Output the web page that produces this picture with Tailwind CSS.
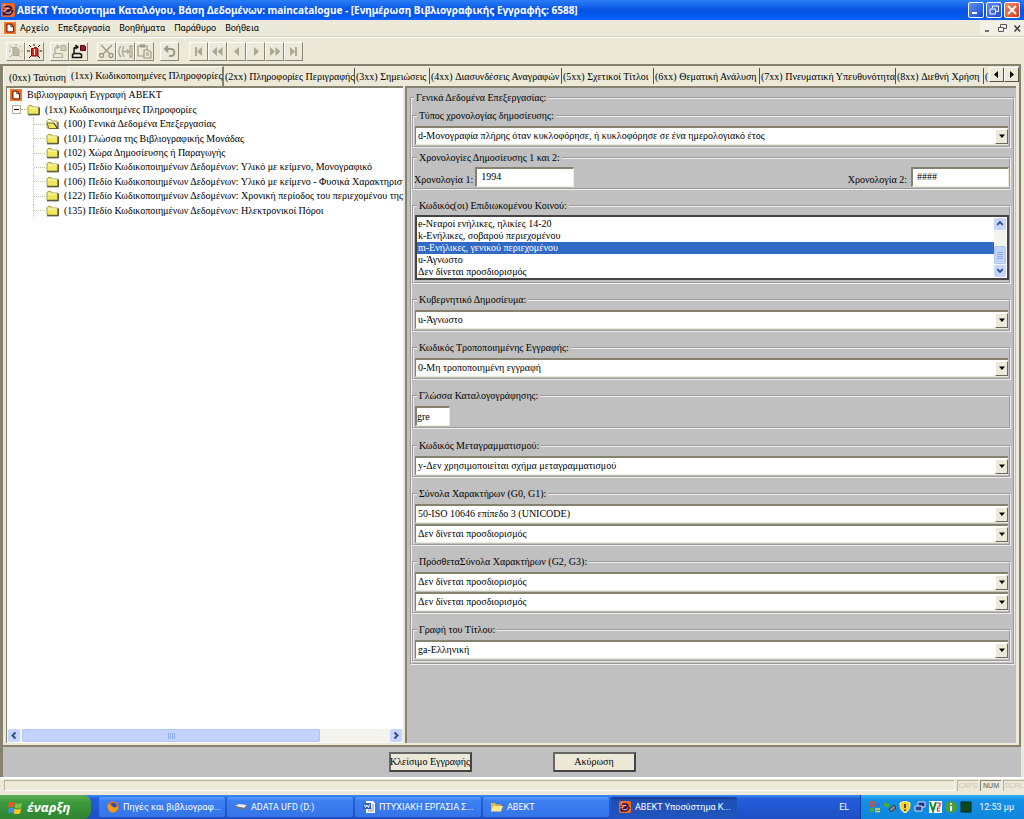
<!DOCTYPE html>
<html lang="el">
<head>
<meta charset="utf-8">
<title>ABEKT Υποσύστημα Καταλόγου</title>
<script src="https://cdn.jsdelivr.net/npm/@tailwindcss/browser@4"></script>
</head>
<body class="h-screen flex flex-col overflow-hidden bg-[#ece9d8] text-black font-['Liberation_Serif',serif] text-[10px] leading-[14px]">

<svg class="hidden" aria-hidden="true">
  <symbol id="abekt" viewBox="0 0 16 16"><rect width="16" height="16" rx="2" fill="#f0641e"/><path d="M4 4h6l2 2-2 2H7M3 7v6h7l3-3V8M5 10h5" fill="none" stroke="#1a1050" stroke-width="2"/><path d="M3 3l2-1M5 6h4M6 11.500h4l1.500-1.500M2 9h3" fill="none" stroke="#d6d2f4" stroke-width="1.200"/></symbol>
  <symbol id="doc" viewBox="0 0 14 14"><rect width="14" height="14" fill="#e8501a"/><rect x="1" y="1" width="12" height="12" fill="none" stroke="#f9a23c"/><path d="M3.500 2.500h4.500l3 3v6H3.500z" fill="#fff" stroke="#3a1206"/><path d="M8 2.500v3H11" fill="none" stroke="#3a1206"/></symbol>
  <symbol id="folder" viewBox="0 0 13 12"><path d="M1 10V2.500l1-1h3l1 1.500h5.500V10z" fill="#f0e75a" stroke="#a5a04a"/><path d="M2 4h8.500" stroke="#fffbd0"/><path d="M1 10.800h11.300V3.500" fill="none" stroke="#2c2c18"/></symbol>
  <symbol id="folder-open" viewBox="0 0 13 12"><path d="M1 10V2.500l1-1h3l1 1.500h5V10z" fill="#fffde0" stroke="#a5a04a"/><path d="M1 5h7l3.500 5.500H3z" fill="#f0e75a" stroke="#6b682e"/><path d="M8 5.500l4 5.300V4" fill="none" stroke="#2c2c18"/></symbol>
  <symbol id="down" viewBox="0 0 8 8"><path d="M1 2.500h6L4 6z" fill="#000"/></symbol>
</svg>

<!-- Title bar -->
<header class="h-5 shrink-0 flex items-center pl-px pr-1 bg-linear-to-b from-[#2a7df5] via-[#0553e2] to-[#0660fa] text-white">
  <svg class="w-3.5 h-3.5 mr-0.5"><use href="#abekt"/></svg>
  <h1 class="flex-1 font-['Noto_Sans',sans-serif] font-bold text-[10px] whitespace-nowrap">ABEKT Υποσύστημα Καταλόγου, Βάση Δεδομένων: maincatalogue - [Ενημέρωση Βιβλιογραφικής Εγγραφής: 6588]</h1>
  <div class="flex gap-0.5">
    <button aria-label="Ελαχιστοποίηση" class="w-4 h-4 rounded-[2px] border border-white bg-linear-to-br from-[#5e8ff5] to-[#1c46cf]"><svg viewBox="0 0 14 14"><path d="M3 10h5" stroke="#fff" stroke-width="2"/></svg></button>
    <button aria-label="Επαναφορά" class="w-4 h-4 rounded-[2px] border border-white bg-linear-to-br from-[#5e8ff5] to-[#1c46cf]"><svg viewBox="0 0 14 14" fill="none" stroke="#fff"><path d="M5.500 5V3h6v5.500H9"/><path d="M3 6h5.500v5H3z"/></svg></button>
    <button aria-label="Κλείσιμο" class="w-4 h-4 rounded-[2px] border border-white bg-linear-to-br from-[#f08a6a] to-[#d3370f]"><svg viewBox="0 0 14 14"><path d="M3 3l8 8M11 3l-8 8" stroke="#fff" stroke-width="1.800"/></svg></button>
  </div>
</header>

<!-- Menu bar -->
<nav class="h-[17px] shrink-0 flex items-center pl-1 border-b border-[#d8d2bd] font-[Roboto,sans-serif] text-[9px]">
  <svg class="w-3 h-3 mr-1"><use href="#doc"/></svg>
  <div class="flex-1 flex gap-[9px]">
    <a href="#">Αρχείο</a><a href="#">Επεξεργασία</a><a href="#">Βοηθήματα</a><a href="#">Παράθυρο</a><a href="#">Βοήθεια</a>
  </div>
  <div class="flex text-[#444]">
    <button aria-label="Ελαχιστοποίηση εγγράφου" class="w-[14px] h-3.5 bg-[#f3f1e6]"><svg viewBox="0 0 14 14"><path d="M5 10h4" stroke="#444" stroke-width="1.500"/></svg></button>
    <button aria-label="Επαναφορά εγγράφου" class="w-[14px] h-3.5 ml-px bg-[#f3f1e6]"><svg viewBox="0 0 14 14" fill="none" stroke="#555"><path d="M5.500 6V3.500h6v4H9"/><path d="M3.500 6.500h5v4h-5z"/></svg></button>
    <button aria-label="Κλείσιμο εγγράφου" class="w-[14px] h-3.5 ml-px bg-[#f3f1e6]"><svg viewBox="0 0 14 14"><path d="M4.500 4.500l5.500 6M10 4.500l-5.500 6" stroke="#444" stroke-width="1.600"/></svg></button>
  </div>
</nav>

<!-- Toolbar -->
<div role="toolbar" class="h-[27px] shrink-0 flex items-center pl-1.5 border-t border-white">
  <button aria-label="Νέα εγγραφή" class="size-[19px] border border-white border-r-[#8a8774] border-b-[#8a8774]"><svg viewBox="0 0 17 17" fill="none" stroke="#aca899"><path d="M6 4.500h4l2 2v6H6z" fill="#bbb8a8"/><path d="M9 1v2M3 3l2 2M14 3l-1 1M2 8h2M14 8h2M3 14l2-2M14 14l-1-1"/></svg></button>
  <button aria-label="Ενημέρωση εγγραφής" class="size-[19px] border border-white border-r-[#8a8774] border-b-[#8a8774]"><svg viewBox="0 0 17 17"><path d="M5.500 5.500h2l1-1h2l1.500 1.500v7h-6.500z" fill="#e02418" stroke="#7a1008"/><path d="M8.500 6v6" stroke="#fff"/><path d="M8 1v2M3 2l2 2M14 2l-2 2M1 8h3M13.500 8H16M3 15l2-2M14 15l-2-2" stroke="#111"/></svg></button>
  <button aria-label="Εισαγωγή" class="size-[19px] ml-1.5 border border-white border-r-[#8a8774] border-b-[#8a8774]"><svg viewBox="0 0 17 17" fill="none" stroke="#aca899"><path d="M4 10V6q0-2 3-2M5.500 2L8 4 5.500 6M2.500 14.500v-3l2-1h5l2 1v3z" stroke-width="1.200"/><path d="M10 2.500h4l1 1v4h-5z" fill="#d0cdbd"/></svg></button>
  <button aria-label="Αποθήκευση" class="size-[19px] border border-white border-r-[#8a8774] border-b-[#8a8774]"><svg viewBox="0 0 17 17" fill="none"><path d="M4 10V6q0-2 3-2M5.500 2L8 4 5.500 6M2.500 14.500v-3l2-1h5l2 1v3z" stroke="#111" stroke-width="1.500"/><path d="M10.500 2.500h4l1 1v4h-5z" fill="#9c1836" stroke="#5a0818"/></svg></button>
  <button aria-label="Αποκοπή" class="size-[19px] ml-[9px] border border-white border-r-[#8a8774] border-b-[#8a8774]"><svg viewBox="0 0 17 17" fill="none" stroke="#9b9888" stroke-width="1.300"><path d="M3 2l9 9M14 2l-9 9"/><circle cx="3.500" cy="12.500" r="2"/><circle cx="13" cy="12.500" r="2"/></svg></button>
  <button aria-label="Αντιγραφή" class="size-[19px] border border-white border-r-[#8a8774] border-b-[#8a8774]"><svg viewBox="0 0 17 17" fill="none" stroke="#aca899" stroke-width="1.300"><path d="M4 3C1 6 1 11 4 14M7 3C5 6 5 11 7 14M6 8.500h6M10 6.500l2 2-2 2M15 3h-2v11h2z"/></svg></button>
  <button aria-label="Επικόλληση" class="size-[19px] border border-white border-r-[#8a8774] border-b-[#8a8774]"><svg viewBox="0 0 17 17" fill="none" stroke="#9b9888" stroke-width="1.200"><path d="M2 3h9v10H2zM4.500 2h4v2h-4z"/><path d="M8 7h4l3 2v6H8zM10 10h3M10 12h3" fill="#ece9d8"/></svg></button>
  <button aria-label="Αναίρεση" class="size-[19px] ml-1.5 border border-white border-r-[#8a8774] border-b-[#8a8774]"><svg viewBox="0 0 17 17" fill="none" stroke="#9b9888" stroke-width="2"><path d="M4 6h6c5 0 4 7 0 7H8"/><path d="M7 3L4 6l3 3"/></svg></button>
  <button aria-label="Πρώτη" class="size-[19px] ml-2.5 border border-white border-r-[#8a8774] border-b-[#8a8774]"><svg viewBox="0 0 17 17" fill="#aca899"><path d="M5 4h2v9H5zM12 4v9L7 8.500z"/></svg></button>
  <button aria-label="Προηγούμενη σελίδα" class="size-[19px] border border-white border-r-[#8a8774] border-b-[#8a8774]"><svg viewBox="0 0 17 17" fill="#aca899"><path d="M8 4v9L3 8.500zM13.500 4v9l-5-4.500z"/></svg></button>
  <button aria-label="Προηγούμενη" class="size-[19px] border border-white border-r-[#8a8774] border-b-[#8a8774]"><svg viewBox="0 0 17 17" fill="#aca899"><path d="M11 4v9L6 8.500z"/></svg></button>
  <button aria-label="Επόμενη" class="size-[19px] border border-white border-r-[#8a8774] border-b-[#8a8774]"><svg viewBox="0 0 17 17" fill="#aca899"><path d="M7 4v9l5-4.500z"/></svg></button>
  <button aria-label="Επόμενη σελίδα" class="size-[19px] border border-white border-r-[#8a8774] border-b-[#8a8774]"><svg viewBox="0 0 17 17" fill="#aca899"><path d="M4 4v9l5-4.500zM9.500 4v9l5-4.500z"/></svg></button>
  <button aria-label="Τελευταία" class="size-[19px] border border-white border-r-[#8a8774] border-b-[#8a8774]"><svg viewBox="0 0 17 17" fill="#aca899"><path d="M5 4v9l5-4.500zM10 4h2v9h-2z"/></svg></button>
</div>

<!-- Document window -->
<main class="flex-1 min-h-0 flex flex-col border-t-2 border-l-3 border-[#85826f] mr-[3px]">
  <div class="flex-1 min-h-0 flex flex-col border-b-2 border-r-2 border-[#85826f] pb-0.5">
    <!-- Tabs -->
    <div class="h-5 shrink-0 flex items-stretch bg-[#ece9d8] border-l border-white">
      <div role="tablist" class="flex-1 min-w-0 flex overflow-hidden whitespace-nowrap">
        <button role="tab" class="shrink-0 w-[64px] pt-1 text-left pl-[5px]">(0xx) Ταύτιση</button>
        <button role="tab" aria-selected="true" class="shrink-0 w-[156px] text-left pl-0.5 pb-0.5 border-l border-t border-white border-r-2 border-r-[#85826f]">(1xx) Κωδικοποιημένες Πληροφορίες</button>
        <button role="tab" class="shrink-0 w-[131px] my-0.5 pt-0.5 text-left pl-px border-r border-[#55534a]">(2xx) Πληροφορίες Περιγραφής</button>
        <button role="tab" class="shrink-0 w-[75px] my-0.5 pt-0.5 text-left pl-px border-r border-[#55534a]">(3xx) Σημειώσεις</button>
        <button role="tab" class="shrink-0 w-[132px] my-0.5 pt-0.5 text-left pl-px border-r border-[#55534a]">(4xx) Διασυνδέσεις Αναγραφών</button>
        <button role="tab" class="shrink-0 w-[92px] my-0.5 pt-0.5 text-left pl-px border-r border-[#55534a]">(5xx) Σχετικοί Τίτλοι</button>
        <button role="tab" class="shrink-0 w-[106px] my-0.5 pt-0.5 text-left pl-px border-r border-[#55534a]">(6xx) Θεματική Ανάλυση</button>
        <button role="tab" class="shrink-0 w-[136px] my-0.5 pt-0.5 text-left pl-px border-r border-[#55534a]">(7xx) Πνευματική Υπευθυνότητα</button>
        <button role="tab" class="shrink-0 w-[88px] my-0.5 pt-0.5 text-left pl-px border-r border-[#55534a]">(8xx) Διεθνή Χρήση</button>
        <button role="tab" class="shrink-0 my-0.5 pt-0.5 text-left pl-px">(</button>
      </div>
      <div class="flex h-[15px] mt-px">
        <button aria-label="Προηγούμενες καρτέλες" class="w-[15px] border border-white border-r-[#55534a] border-b-[#55534a]"><svg viewBox="0 0 13 13"><path d="M8 3v7L4 6.500z"/></svg></button>
        <button aria-label="Επόμενες καρτέλες" class="w-[15px] border border-white border-r-[#55534a] border-b-[#55534a]"><svg viewBox="0 0 13 13"><path d="M5 3v7l4-3.500z"/></svg></button>
      </div>
    </div>

    <div class="flex-1 min-h-0 flex gap-0.5 pl-[3px] pr-[3px]">
      <!-- Record tree -->
      <section class="w-[397px] shrink-0 flex flex-col bg-white border-t-2 border-l border-[#85826f]">
        <ul class="flex-1 overflow-hidden whitespace-nowrap">
          <li class="flex items-center gap-[5px] h-3.5 pl-[3px]"><svg class="size-3"><use href="#doc"/></svg>Βιβλιογραφική Εγγραφή ABEKT</li>
          <li>
            <div class="flex items-center h-[15px] pl-[5px]"><span class="size-[9px] border border-[#b5b19c] flex items-center justify-center"><span class="w-[5px] h-px bg-black"></span></span><span class="w-1.5 border-t border-dotted border-[#b5b19c]"></span><svg class="w-[13px] h-3 mr-[5px]"><use href="#folder"/></svg>(1xx) Κωδικοποιημένες Πληροφορίες</div>
            <ul class="ml-[26px] h-[101px] grid grid-rows-7">
              <li class="flex items-center gap-[5px] border-l border-dotted border-[#c5c2b0]"><span class="w-[11px] -mr-1 border-t border-dotted border-[#c5c2b0]"></span><svg class="w-[13px] h-3 shrink-0"><use href="#folder-open"/></svg>(100) Γενικά Δεδομένα Επεξεργασίας</li>
              <li class="flex items-center gap-[5px] border-l border-dotted border-[#c5c2b0]"><span class="w-[11px] -mr-1 border-t border-dotted border-[#c5c2b0]"></span><svg class="w-[13px] h-3 shrink-0"><use href="#folder"/></svg>(101) Γλώσσα της Βιβλιογραφικής Μονάδας</li>
              <li class="flex items-center gap-[5px] border-l border-dotted border-[#c5c2b0]"><span class="w-[11px] -mr-1 border-t border-dotted border-[#c5c2b0]"></span><svg class="w-[13px] h-3 shrink-0"><use href="#folder"/></svg>(102) Χώρα Δημοσίευσης ή Παραγωγής</li>
              <li class="flex items-center gap-[5px] border-l border-dotted border-[#c5c2b0]"><span class="w-[11px] -mr-1 border-t border-dotted border-[#c5c2b0]"></span><svg class="w-[13px] h-3 shrink-0"><use href="#folder"/></svg>(105) Πεδίο Κωδικοποιημένων Δεδομένων: Υλικό με κείμενο, Μονογραφικό</li>
              <li class="flex items-center gap-[5px] border-l border-dotted border-[#c5c2b0]"><span class="w-[11px] -mr-1 shrink-0 border-t border-dotted border-[#c5c2b0]"></span><svg class="w-[13px] h-3 shrink-0"><use href="#folder"/></svg>(106) Πεδίο Κωδικοποιημένων Δεδομένων: Υλικό με κείμενο - Φυσικά Χαρακτηριστικο</li>
              <li class="flex items-center gap-[5px] border-l border-dotted border-[#c5c2b0]"><span class="w-[11px] -mr-1 shrink-0 border-t border-dotted border-[#c5c2b0]"></span><svg class="w-[13px] h-3 shrink-0"><use href="#folder"/></svg>(122) Πεδίο Κωδικοποιημένων Δεδομένων: Χρονική περίοδος του περιεχομένου της β</li>
              <li class="flex items-center gap-[5px] border-l border-dotted border-[#c5c2b0]"><span class="w-[11px] -mr-1 border-t border-dotted border-[#c5c2b0]"></span><svg class="w-[13px] h-3 shrink-0"><use href="#folder"/></svg>(135) Πεδίο Κωδικοποιημένων Δεδομένων: Ηλεκτρονικοί Πόροι</li>
            </ul>
          </li>
        </ul>
        <div class="h-[13px] mb-px flex bg-[#f4f3ee]">
          <button aria-label="Κύλιση αριστερά" class="w-3 ml-px rounded-[2px] bg-[#c6d5fd]"><svg viewBox="0 0 12 13"><path d="M7.500 3.500l-3 3 3 3" fill="none" stroke="#31507f" stroke-width="2"/></svg></button>
          <div class="flex-1 pl-0.5 flex"><div class="w-[81%] rounded-[2px] border border-[#b0c4f5] bg-[#c3d3fd] flex justify-center items-center gap-px"><i class="w-px h-1.5 bg-[#8faaf0]"></i><i class="w-px h-1.5 bg-[#8faaf0]"></i><i class="w-px h-1.5 bg-[#8faaf0]"></i><i class="w-px h-1.5 bg-[#8faaf0]"></i></div></div>
          <button aria-label="Κύλιση δεξιά" class="w-3 mr-px rounded-[2px] bg-[#c6d5fd]"><svg viewBox="0 0 12 13"><path d="M4.500 3.500l3 3-3 3" fill="none" stroke="#31507f" stroke-width="2"/></svg></button>
        </div>
      </section>

      <!-- Field editor -->
      <form class="flex-1 min-w-0 bg-[#c0c0c0] border-t-2 border-l-2 border-[#85826f] pt-[3px] pl-[3px] pr-px">
        <fieldset class="min-w-0 border-2 [border-style:groove] border-[#eeeeee] pb-px">
          <legend class="ml-0.5 px-0.5 h-3.5 leading-[14px]">Γενικά Δεδομένα Επεξεργασίας:</legend>

          <fieldset class="mt-1 mr-0.5 min-w-0 border-2 [border-style:groove] border-[#eeeeee] pt-[3px] pl-px pr-px pb-px">
            <legend class="ml-0.5 px-0.5 h-3.5 leading-[14px]"><label for="f1">Τύπος χρονολογίας δημοσίευσης:</label></legend>
            <div class="grid h-[19px]"><select id="f1" class="[grid-area:1/1] appearance-none bg-white border-t-2 border-l border-[#85826f] border-b border-b-[#ece9d8] pl-0.5 pb-px leading-[14px]"><option>d-Μονογραφία πλήρης όταν κυκλοφόρησε, ή κυκλοφόρησε σε ένα ημερολογιακό έτος</option></select><span class="[grid-area:1/1] justify-self-end self-center mt-px w-[13px] h-[15px] pointer-events-none bg-[#ece9d8] border border-white border-r-[#6b6959] border-b-[#6b6959] flex items-center justify-center"><svg class="size-2"><use href="#down"/></svg></span></div>
          </fieldset>

          <fieldset class="mt-[3px] mr-0.5 min-w-0 border-2 [border-style:groove] border-[#eeeeee]">
            <legend class="ml-[3px] px-0.5 h-3.5 leading-[14px]">Χρονολογίες Δημοσίευσης 1 και 2:</legend>
            <div class="flex items-start pt-0.5 h-[23px]">
              <label for="d1" class="pt-1.5">Χρονολογία 1:</label>
              <input id="d1" value="1994" class="ml-0.5 w-[99px] h-5 px-1 pb-0.5 bg-white border-t-2 border-l-2 border-[#85826f] border-b border-r border-b-[#ece9d8] border-r-[#ece9d8]">
              <label for="d2" class="ml-auto pt-1.5">Χρονολογία 2:</label>
              <input id="d2" value="####" class="ml-1 w-[98px] h-5 px-1 pb-0.5 bg-white border-t-2 border-l-2 border-[#85826f] border-b border-r border-b-[#ece9d8] border-r-[#ece9d8]">
            </div>
          </fieldset>

          <fieldset class="mt-[9px] mr-0.5 min-w-0 border-2 [border-style:groove] border-[#eeeeee] pt-0.5 pl-px pb-0.5">
            <legend class="ml-0.5 px-0.5 h-3.5 leading-[14px]"><label for="aud">Κωδικός(οι) Επιδιωκομένου Κοινού:</label></legend>
            <div class="flex h-[65px] bg-white border-2 border-[#444] pt-px pr-px">
              <select id="aud" size="5" class="flex-1 appearance-none bg-none overflow-hidden leading-3 outline-none">
                <option class="h-3 min-h-0 p-0 pl-px leading-3">e-Νεαροί ενήλικες, ηλικίες 14-20</option>
                <option class="h-3 min-h-0 p-0 pl-px leading-3">k-Ενήλικες, σοβαρού περιεχομένου</option>
                <option selected class="h-3 min-h-0 p-0 pl-px leading-3 bg-linear-to-r from-[#316ac5] to-[#316ac5] [-webkit-text-fill-color:#fff]">m-Ενήλικες, γενικού περιεχομένου</option>
                <option class="h-3 min-h-0 p-0 pl-px leading-3">u-Άγνωστο</option>
                <option class="h-3 min-h-0 p-0 pl-px leading-3">Δεν δίνεται προσδιορισμός</option>
              </select>
              <div class="w-3 flex flex-col bg-[#f4f3ee] mb-px">
                <button type="button" aria-label="Κύλιση πάνω" class="h-3 rounded-[2px] bg-[#c6d5fd]"><svg viewBox="0 0 13 12"><path d="M3.500 7.500l3-3 3 3" fill="none" stroke="#31507f" stroke-width="2"/></svg></button>
                <div class="flex-1"></div>
                <div class="h-[18px] rounded-[2px] border border-[#b0c4f5] bg-[#c3d3fd] flex flex-col justify-center items-center gap-px"><i class="w-1.5 h-px bg-[#8faaf0]"></i><i class="w-1.5 h-px bg-[#8faaf0]"></i><i class="w-1.5 h-px bg-[#8faaf0]"></i><i class="w-1.5 h-px bg-[#8faaf0]"></i></div>
                <button type="button" aria-label="Κύλιση κάτω" class="h-3 mt-px rounded-[2px] bg-[#c6d5fd]"><svg viewBox="0 0 13 12"><path d="M3.500 4.500l3 3 3-3" fill="none" stroke="#31507f" stroke-width="2"/></svg></button>
              </div>
            </div>
          </fieldset>

          <fieldset class="mt-[9px] mr-0.5 min-w-0 border-2 [border-style:groove] border-[#eeeeee] pt-[3px] px-px pb-px">
            <legend class="ml-0.5 px-0.5 h-3.5 leading-[14px]"><label for="f4">Κυβερνητικό Δημοσίευμα:</label></legend>
            <div class="grid h-[19px]"><select id="f4" class="[grid-area:1/1] appearance-none bg-white border-t-2 border-l border-[#85826f] border-b border-b-[#ece9d8] pl-0.5 leading-[14px]"><option>u-Άγνωστο</option></select><span class="[grid-area:1/1] justify-self-end self-center mt-px w-[13px] h-[15px] pointer-events-none bg-[#ece9d8] border border-white border-r-[#6b6959] border-b-[#6b6959] flex items-center justify-center"><svg class="size-2"><use href="#down"/></svg></span></div>
          </fieldset>

          <fieldset class="mt-[9px] mr-0.5 min-w-0 border-2 [border-style:groove] border-[#eeeeee] pt-[3px] px-px pb-px">
            <legend class="ml-0.5 px-0.5 h-3.5 leading-[14px]"><label for="f5">Κωδικός Τροποποιημένης Εγγραφής:</label></legend>
            <div class="grid h-[19px]"><select id="f5" class="[grid-area:1/1] appearance-none bg-white border-t-2 border-l border-[#85826f] border-b border-b-[#ece9d8] pl-0.5 leading-[14px]"><option>0-Μη τροποποιημένη εγγραφή</option></select><span class="[grid-area:1/1] justify-self-end self-center mt-px w-[13px] h-[15px] pointer-events-none bg-[#ece9d8] border border-white border-r-[#6b6959] border-b-[#6b6959] flex items-center justify-center"><svg class="size-2"><use href="#down"/></svg></span></div>
          </fieldset>

          <fieldset class="mt-[9px] mr-0.5 min-w-0 border-2 [border-style:groove] border-[#eeeeee] pt-[3px] px-px pb-px">
            <legend class="ml-0.5 px-0.5 h-3.5 leading-[14px]"><label for="f6">Γλώσσα Καταλογογράφησης:</label></legend>
            <input id="f6" value="gre" class="block w-[35px] h-5 pb-px bg-white border-t-2 border-l-2 border-[#85826f] border-b border-r border-b-[#ece9d8] border-r-[#ece9d8]">
          </fieldset>

          <fieldset class="mt-[10px] mr-0.5 min-w-0 border-2 [border-style:groove] border-[#eeeeee] pt-[3px] px-px pb-px">
            <legend class="ml-0.5 px-0.5 h-3.5 leading-[14px]"><label for="f7">Κωδικός Μεταγραμματισμού:</label></legend>
            <div class="grid h-[19px]"><select id="f7" class="[grid-area:1/1] appearance-none bg-white border-t-2 border-l border-[#85826f] border-b border-b-[#ece9d8] pl-0.5 leading-[14px]"><option>y-Δεν χρησιμοποιείται σχήμα μεταγραμματισμού</option></select><span class="[grid-area:1/1] justify-self-end self-center mt-px w-[13px] h-[15px] pointer-events-none bg-[#ece9d8] border border-white border-r-[#6b6959] border-b-[#6b6959] flex items-center justify-center"><svg class="size-2"><use href="#down"/></svg></span></div>
          </fieldset>

          <fieldset class="mt-[9px] mr-0.5 min-w-0 border-2 [border-style:groove] border-[#eeeeee] pt-[3px] px-px pb-px">
            <legend class="ml-0.5 px-0.5 h-3.5 leading-[14px]">Σύνολα Χαρακτήρων (G0, G1):</legend>
            <div class="grid h-[19px]"><select aria-label="G0" class="[grid-area:1/1] appearance-none bg-white border-t-2 border-l border-[#85826f] border-b border-b-[#ece9d8] pl-0.5 leading-[14px]"><option>50-ISO 10646 επίπεδο 3 (UNICODE)</option></select><span class="[grid-area:1/1] justify-self-end self-center mt-px w-[13px] h-[15px] pointer-events-none bg-[#ece9d8] border border-white border-r-[#6b6959] border-b-[#6b6959] flex items-center justify-center"><svg class="size-2"><use href="#down"/></svg></span></div>
            <div class="grid h-[19px] mt-px"><select aria-label="G1" class="[grid-area:1/1] appearance-none bg-white border-t-2 border-l border-[#85826f] border-b border-b-[#ece9d8] pl-0.5 leading-[14px]"><option>Δεν δίνεται προσδιορισμός</option></select><span class="[grid-area:1/1] justify-self-end self-center mt-px w-[13px] h-[15px] pointer-events-none bg-[#ece9d8] border border-white border-r-[#6b6959] border-b-[#6b6959] flex items-center justify-center"><svg class="size-2"><use href="#down"/></svg></span></div>
          </fieldset>

          <fieldset class="mt-[9px] mr-0.5 min-w-0 border-2 [border-style:groove] border-[#eeeeee] pt-[3px] px-px pb-px">
            <legend class="ml-0.5 px-0.5 h-3.5 leading-[14px]">ΠρόσθεταΣύνολα Χαρακτήρων (G2, G3):</legend>
            <div class="grid h-[19px]"><select aria-label="G2" class="[grid-area:1/1] appearance-none bg-white border-t-2 border-l border-[#85826f] border-b border-b-[#ece9d8] pl-0.5 leading-[14px]"><option>Δεν δίνεται προσδιορισμός</option></select><span class="[grid-area:1/1] justify-self-end self-center mt-px w-[13px] h-[15px] pointer-events-none bg-[#ece9d8] border border-white border-r-[#6b6959] border-b-[#6b6959] flex items-center justify-center"><svg class="size-2"><use href="#down"/></svg></span></div>
            <div class="grid h-[19px] mt-px"><select aria-label="G3" class="[grid-area:1/1] appearance-none bg-white border-t-2 border-l border-[#85826f] border-b border-b-[#ece9d8] pl-0.5 leading-[14px]"><option>Δεν δίνεται προσδιορισμός</option></select><span class="[grid-area:1/1] justify-self-end self-center mt-px w-[13px] h-[15px] pointer-events-none bg-[#ece9d8] border border-white border-r-[#6b6959] border-b-[#6b6959] flex items-center justify-center"><svg class="size-2"><use href="#down"/></svg></span></div>
          </fieldset>

          <fieldset class="mt-[9px] mr-0.5 min-w-0 border-2 [border-style:groove] border-[#eeeeee] pt-[3px] px-px pb-px">
            <legend class="ml-0.5 px-0.5 h-3.5 leading-[14px]"><label for="f10">Γραφή του Τίτλου:</label></legend>
            <div class="grid h-[19px]"><select id="f10" class="[grid-area:1/1] appearance-none bg-white border-t-2 border-l border-[#85826f] border-b border-b-[#ece9d8] pl-0.5 leading-[14px]"><option>ga-Ελληνική</option></select><span class="[grid-area:1/1] justify-self-end self-center mt-px w-[13px] h-[15px] pointer-events-none bg-[#ece9d8] border border-white border-r-[#6b6959] border-b-[#6b6959] flex items-center justify-center"><svg class="size-2"><use href="#down"/></svg></span></div>
          </fieldset>
        </fieldset>
      </form>
    </div>
  </div>

  <div class="h-[30px] shrink-0 flex items-center justify-center gap-[81px] bg-[#c0c0c0] whitespace-nowrap">
    <button class="w-[83px] h-5 flex items-center justify-center bg-[#ece9d8] border-2 border-[#444] border-t-[#666] border-l-[#666]">Κλείσιμο Εγγραφής</button>
    <button class="w-[83px] h-5 flex items-center justify-center bg-[#ece9d8] border-2 border-[#444] border-t-[#666] border-l-[#666]">Ακύρωση</button>
  </div>
</main>

<!-- Status bar -->
<footer class="h-[18px] shrink-0 flex items-start gap-0.5 pt-px pl-1 border-t-2 border-white font-['Liberation_Sans',sans-serif] text-[7px] leading-[10px]">
  <div class="flex-1 h-[11px] border border-[#b5b19c] border-r-white border-b-white"></div>
  <div class="w-[21px] h-[11px] text-center text-[#c9c5b2] border-l border-t border-[#b5b19c]">CAPS</div>
  <div class="w-[21px] h-[11px] text-center text-[#555] border-l border-t border-[#85826f]">NUM</div>
  <div class="w-[21px] h-[11px] text-center text-[#c9c5b2] border-l border-t border-[#b5b19c]">SCRL</div>
</footer>

<!-- Taskbar -->
<div class="h-6 shrink-0 flex items-stretch bg-linear-to-b from-[#3f8cf3] via-[#245edb] via-15% to-[#1f4fc4] text-white font-[Roboto,sans-serif] text-[9px] whitespace-nowrap">
  <button class="w-[91px] mr-2 flex items-center pl-2 gap-1 rounded-r-lg bg-linear-to-b from-[#5eac56] via-[#3c9a3c] via-30% to-[#2f8331] font-['Open_Sans',sans-serif] font-bold italic text-[13px]">
    <svg class="size-[15px]" viewBox="0 0 16 16"><path d="M1 3c2-1.500 4-1.500 6 0L6 8C4 7 2 7 0 8z" fill="#f1592a"/><path d="M8 3c2 1.500 4 1.500 7 0l-1 5c-2 1.500-5 1-7 0z" fill="#7fc241"/><path d="M0 9c2-1 4-1 6 0l-1 5c-2-1-4-1-6 0z" fill="#3f8ff0" transform="translate(1 0)"/><path d="M7 9c2 1.500 4 1.500 7 0l-1 5c-3 1.500-5 1-7 0z" fill="#fcc61d"/></svg>έναρξη</button>
  <div class="flex-1 min-w-0 flex gap-0.5 py-0.5">
    <button class="w-[126px] flex items-center gap-1 pl-2 rounded-[2px] bg-linear-to-b from-[#5a9bff] via-[#3c7ff0] via-20% to-[#3475ea]"><svg class="size-3" viewBox="0 0 12 12"><circle cx="6" cy="6" r="5.500" fill="#ee6a10"/><circle cx="6.500" cy="5" r="3" fill="#2a52b0"/><path d="M1 3c2 0 3 1 5 3 2 1 4 0 5-1 0 4-2 6-5 6.500C2 11 0 7 1 3z" fill="#f59a1c"/></svg>Πηγές και βιβλιογραφ...</button>
    <button class="w-[126px] flex items-center gap-1 pl-2 rounded-[2px] bg-linear-to-b from-[#5a9bff] via-[#3c7ff0] via-20% to-[#3475ea]"><svg class="size-3" viewBox="0 0 12 12"><path d="M0 5l4-2 8 1-3 3z" fill="#eee"/><path d="M0 5l9 2 3-3v2L9 9 0 6.500z" fill="#777"/></svg>ADATA UFD (D:)</button>
    <button class="w-[126px] flex items-center gap-1 pl-2 rounded-[2px] bg-linear-to-b from-[#5a9bff] via-[#3c7ff0] via-20% to-[#3475ea]"><svg class="size-3" viewBox="0 0 12 12"><path d="M3 0h7l2 2v10H3z" fill="#fff"/><path d="M5 8h6M5 10h6M9 4h2M9 6h2" stroke="#88a"/><path d="M0 2h8v6H0z" fill="#2b5fb8"/><path d="M1.500 3.500L2.500 6.500 4 4l1.500 2.500 1-3" fill="none" stroke="#fff"/></svg>ΠΤΥΧΙΑΚΗ ΕΡΓΑΣΙΑ Σ...</button>
    <button class="w-[126px] flex items-center gap-1 pl-2 rounded-[2px] bg-linear-to-b from-[#5a9bff] via-[#3c7ff0] via-20% to-[#3475ea]"><svg class="size-3" viewBox="0 0 12 12"><path d="M0 10V2h4l1 1.500h5V10z" fill="#e8b83a"/><path d="M0 10.500L2 5h10l-2 5.500z" fill="#fbe88a"/></svg>ABEKT</button>
    <button aria-pressed="true" class="w-[126px] flex items-center gap-1 pl-2 rounded-[2px] bg-linear-to-b from-[#163f96] via-[#1e50b5] via-20% to-[#2055bd]"><svg class="size-3"><use href="#abekt"/></svg>ABEKT Υποσύστημα Κ...</button>
  </div>
  <div class="w-[21px] flex items-center">EL</div>
  <div class="flex items-center gap-[3px] pl-2 pr-2.5 border-l border-[#0a3fa8] bg-linear-to-b from-[#37b2f5] via-[#1390e6] via-20% to-[#0f86dc]">
    <svg class="size-3" viewBox="0 0 12 12" fill="none"><rect x="1" y="1" width="4" height="4" stroke="#e04a2a" stroke-width="1.500"/><path d="M7 2h4v3H7z" fill="#3a6ad0"/><path d="M1 7h4v4H1z" fill="#48a840"/><path d="M6 8h5M6 10.500h5" stroke="#f4d03a" stroke-width="1.500"/></svg>
    <svg class="size-3" viewBox="0 0 12 12"><path d="M5 8l5-4 2 3-5 4z" fill="#888" stroke="#333"/><path d="M0 1l6 2-2 4-4-2z" fill="#3fae3a"/></svg>
    <svg class="size-3" viewBox="0 0 12 12"><path d="M6 0l5 2c0 5-1 8-5 10C2 10 1 7 1 2z" fill="#f8d030" stroke="#fff6b0"/><path d="M6 3v4M6 8.500v1.500" stroke="#222" stroke-width="1.500"/></svg>
    <svg class="size-3" viewBox="0 0 12 12" stroke="#dde"><path d="M4 1h7v5H4z" fill="#1a3590"/><path d="M1 5h7v5H1z" fill="#27479f"/></svg>
    <svg class="w-[13px] h-3" viewBox="0 0 13 12"><rect width="13" height="12" fill="#fff"/><path d="M1 1l3 9 3-9" fill="none" stroke="#128a2a" stroke-width="2"/><path d="M8 2h3v3H8.500M11 7H8.500v3H11" fill="none" stroke="#c02040" stroke-width="1.200"/></svg>
    <svg class="size-3" viewBox="0 0 12 12"><circle cx="6" cy="6" r="6" fill="#4a9e38"/><path d="M6 5v5M6 2v1.600" stroke="#fff" stroke-width="2"/></svg>
    <svg class="w-3 h-3" viewBox="0 0 12 12"><rect x="1" y="1" width="10" height="10" fill="#064a1e" stroke="#0a2a14"/></svg>
    <span class="pl-1">12:53 μμ</span>
  </div>
</div>
</body>
</html>
